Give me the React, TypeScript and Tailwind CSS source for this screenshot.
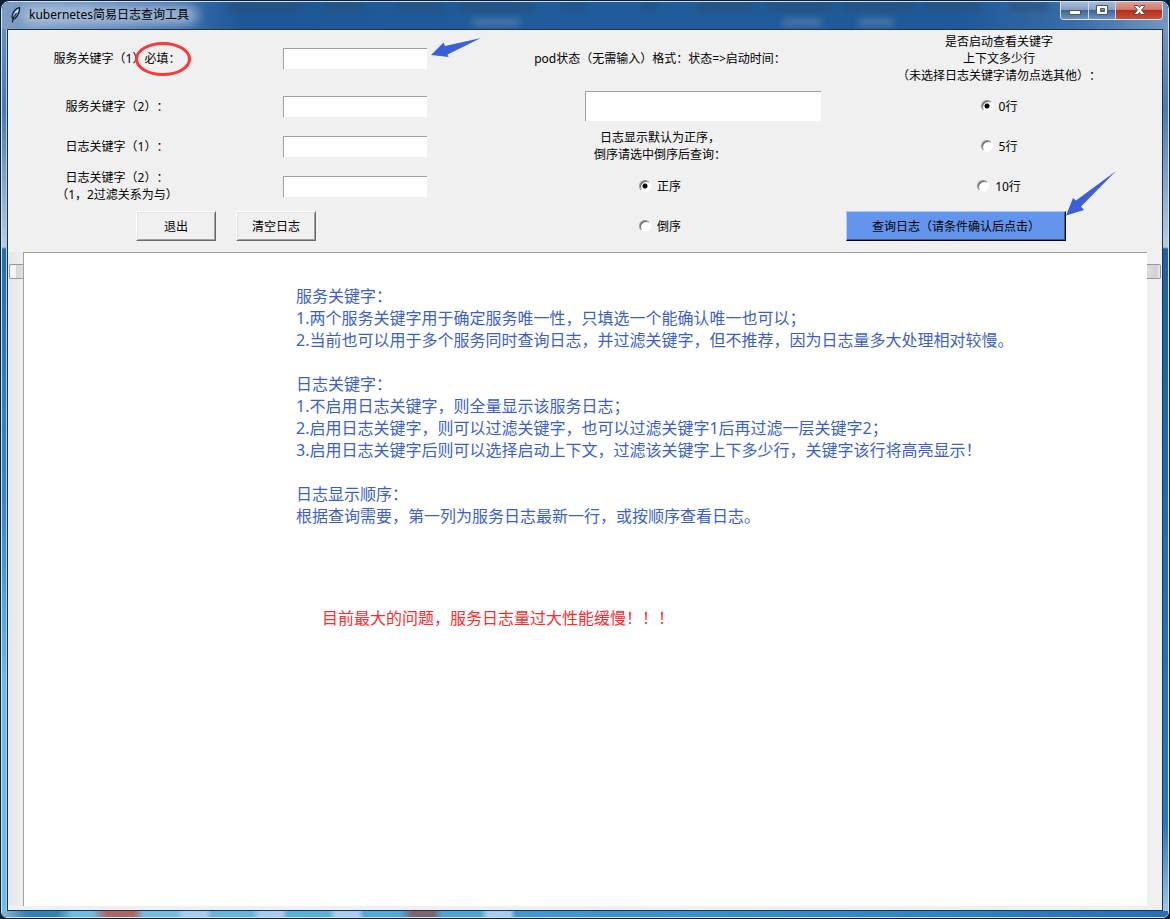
import { useState } from "react";
import type { ReactNode } from "react";

const SMUDGES = [
  [228, 6, 74], [326, 6, 38], [398, 6, 44], [460, 6, 74], [472, 22, 48],
  [560, 6, 26], [642, 6, 14], [698, 6, 54], [768, 6, 64], [782, 22, 40],
  [844, 6, 68], [858, 22, 36], [926, 6, 54], [1010, 6, 38],
];

const CONTEXT = [
  { value: "0", label: "0行" },
  { value: "5", label: "5行" },
  { value: "10", label: "10行" },
];

function Entry({ id }: { id: string }) {
  return (
    <input
      id={id}
      type="text"
      className="w-36 h-[21px] px-1 bg-white border-t border-l border-[#a0a0a0] outline-none"
    />
  );
}

interface RadioProps {
  name: string;
  label: string;
  checked: boolean;
  onChange: () => void;
}

function Radio({ name, label, checked, onChange }: RadioProps) {
  return (
    <label className="flex items-center gap-1.5">
      <input
        type="radio"
        name={name}
        checked={checked}
        onChange={onChange}
        className="appearance-none size-3 rounded-full bg-white border border-t-[#909090] border-l-[#909090] border-r-white border-b-white shadow-[inset_1px_1px_0_#606060] checked:bg-[radial-gradient(circle,#000_2px,#fff_3px)]"
      />
      {label}
    </label>
  );
}

function PushButton({ children }: { children: ReactNode }) {
  return (
    <button
      type="button"
      className="w-20 h-[30px] bg-[#f0f0f0] border border-t-white border-l-white border-r-[#696969] border-b-[#696969] shadow-[inset_1px_1px_0_#e3e3e3,inset_-1px_-1px_0_#a0a0a0]"
    >
      {children}
    </button>
  );
}

function Feather() {
  return (
    <svg width="12" height="18" viewBox="0 0 12 18">
      <path d="M9.500 1.500 C5.500 2 2.500 6 2 11 L3 13 L5 12.500 C8 9.500 10 5.500 9.500 1.500Z" fill="#6fa6d8" stroke="#101820" strokeWidth="1.200" />
      <path d="M8 4 C6 6 4.600 8.500 3.900 11" stroke="#e6f3ff" strokeWidth="1.400" fill="none" />
      <path d="M6.500 7 L3.200 12 L2.400 16.500" stroke="#101820" strokeWidth="1.200" fill="none" />
    </svg>
  );
}

function TitleBar() {
  return (
    <header className="relative flex items-center h-[27px] pl-2 pb-0.5 rounded-t-md overflow-hidden bg-[linear-gradient(90deg,#7f9dc4_0,#6b8fbe_80px,#3f70ab_170px,#1e5796_240px,#205c9b_50%,#1f5998_82%,#3a6ca8_92%,#7396c2_100%)]">
      <svg className="absolute inset-0 w-full h-full blur-[3px]" aria-hidden="true">
        {SMUDGES.map(([x, y, w]) => (
          <rect key={`${x}-${y}`} x={x - 2} y={y - 6} width={w} height="9" fill={y > 10 ? "#5d82aa" : "#2c4f74"} opacity="0.6" />
        ))}
      </svg>
      <div className="absolute left-5 top-1 w-44 h-[18px] rounded-full bg-[#c4d5e8] opacity-70 blur-[6px]" />
      <div className="relative flex items-center gap-[7px]">
        <Feather />
        <h1>kubernetes简易日志查询工具</h1>
      </div>
      <div className="absolute top-0 right-[5px] flex h-[18px] rounded-b border border-t-0 border-[#dbe7f3] overflow-hidden">
        <button type="button" aria-label="最小化" className="w-7 border-r border-[#c9d9ea] bg-[linear-gradient(#a9bdd5_0,#7f9cc0_48%,#3e6596_50%,#6d93be_100%)]">
          <svg width="27" height="17" viewBox="0 0 27 17">
            <rect x="8.5" y="8.5" width="11" height="4" fill="#fff" stroke="#4b5668" />
          </svg>
        </button>
        <button type="button" aria-label="最大化" className="w-[27px] border-r border-[#c9d9ea] bg-[linear-gradient(#a9bdd5_0,#7f9cc0_48%,#3e6596_50%,#6d93be_100%)]">
          <svg width="26" height="17" viewBox="0 0 26 17">
            <path d="M7.5 3.5h11v9h-11z M11.5 6.5v3h4v-3z" fill="#fff" fillRule="evenodd" stroke="#4b5668" />
          </svg>
        </button>
        <button type="button" aria-label="关闭" className="w-[46px] bg-[linear-gradient(#dfa093_0,#cf7566_48%,#b52f1b_50%,#c9503c_100%)]">
          <svg width="46" height="17" viewBox="0 0 46 17">
            <path d="M18.5 3.5h3.500l1.500 2 1.500-2h3.500v1l-3 3.500 3 3.500v1H25l-1.500-2-1.500 2h-3.500v-1l3-3.500-3-3.500z" fill="#fff" stroke="#5a4450" />
          </svg>
        </button>
      </div>
    </header>
  );
}

export default function App() {
  const [order, setOrder] = useState("asc");
  const [context, setContext] = useState("0");

  return (
    <div className="min-h-screen flex flex-col p-px bg-[#0b2038] text-xs leading-[17px] text-black font-['Noto_Sans','Noto_Sans_CJK_SC',sans-serif] [text-spacing-trim:space-all]">
      <div className="flex-1 flex flex-col rounded-t-lg rounded-b-md border border-[#cfe3f3] overflow-hidden">
        <TitleBar />

        <div className="flex-1 flex">
          <div className="w-[5px] bg-[linear-gradient(#6b8fbe_0,#4a7ab0_80px,#b9cde2_218px,#256fae_220px,#3a8cc6_55%,#6fbde6_75%)]" />
          <main className="flex-1 flex flex-col bg-[#f0f0f0] border border-[#1b3450] outline outline-[#a9cbe2]">
            <form className="grid grid-cols-[218fr_258fr_352fr_326fr] grid-rows-[56px_repeat(4,40px)] items-center justify-items-center text-center">
              <label htmlFor="service1" className="relative">
                服务关键字（1）必填：
                <svg className="absolute -right-3 -top-2" width="58" height="36" viewBox="0 0 58 36">
                  <ellipse cx="29" cy="17" rx="26.500" ry="15.500" fill="none" stroke="#fb3737" strokeWidth="3" />
                </svg>
              </label>
              <div className="relative flex">
                <Entry id="service1" />
                <svg className="absolute left-full -top-3 ml-1" width="52" height="24" viewBox="0 0 52 24">
                  <path d="M0 19 L12.500 6.500 L14 10 L50 2 L16.500 18.500 L17.500 21Z" fill="#3a5fd9" />
                </svg>
              </div>
              <label htmlFor="pod">pod状态（无需输入）格式：状态=&gt;启动时间：</label>
              <p>
                是否启动查看关键字
                <br />
                上下文多少行
                <br />
                （未选择日志关键字请勿点选其他）：
              </p>

              <label htmlFor="service2">服务关键字（2）：</label>
              <Entry id="service2" />
              <input
                id="pod"
                type="text"
                className="w-[236px] h-[30px] px-1 mr-[15px] justify-self-end bg-white border-t border-l border-[#a0a0a0] outline-none"
              />
              <Radio name="context" label={CONTEXT[0].label} checked={context === "0"} onChange={() => setContext("0")} />

              <label htmlFor="log1">日志关键字（1）：</label>
              <Entry id="log1" />
              <p>
                日志显示默认为正序，
                <br />
                倒序请选中倒序后查询：
              </p>
              <Radio name="context" label={CONTEXT[1].label} checked={context === "5"} onChange={() => setContext("5")} />

              <label htmlFor="log2">
                日志关键字（2）：
                <br />
                （1，2过滤关系为与）
              </label>
              <Entry id="log2" />
              <Radio name="order" label="正序" checked={order === "asc"} onChange={() => setOrder("asc")} />
              <Radio name="context" label={CONTEXT[2].label} checked={context === "10"} onChange={() => setContext("10")} />

              <div className="col-span-2 justify-self-start flex gap-5 pl-32">
                <PushButton>退出</PushButton>
                <PushButton>清空日志</PushButton>
              </div>
              <Radio name="order" label="倒序" checked={order === "desc"} onChange={() => setOrder("desc")} />
              <div className="relative justify-self-start ml-[10px]">
                <button
                  type="button"
                  className="w-[220px] h-[30px] bg-[#6495ed] border border-t-[#a8cdf8] border-l-[#a8cdf8] border-r-black border-b-black shadow-[inset_-1px_-1px_0_#3c5a8f]"
                >
                  查询日志（请条件确认后点击）
                </button>
                <svg className="absolute left-full bottom-[25px]" width="52" height="46" viewBox="0 0 52 46">
                  <path d="M0 45.500 L7 28 L10 30.500 L50 1 L15 36.500 L18 40Z" fill="#3a5fd9" />
                </svg>
              </div>
            </form>

            {/* Log output */}
            <section className="flex-1 flex pt-1.5 pb-1">
              <div className="w-[15px] pl-px pt-3 bg-[linear-gradient(90deg,#f0f0f0,#e6e6e6_2px,#f0f0f0)]">
                <div className="h-[15px] rounded-l-xs border border-r-0 border-[#979797] bg-[linear-gradient(90deg,#f5f5f5_45%,#d6d7da_50%,#dfe0e2)]" />
              </div>
              <div className="flex-1 bg-white border-t border-l border-[#a0a0a0] pl-[272px] pt-8 text-base leading-[22px] text-[#3a5fcd]">
                <h2>服务关键字：</h2>
                <p>1.两个服务关键字用于确定服务唯一性，只填选一个能确认唯一也可以；</p>
                <p>2.当前也可以用于多个服务同时查询日志，并过滤关键字，但不推荐，因为日志量多大处理相对较慢。</p>
                <h2 className="mt-[22px]">日志关键字：</h2>
                <p>1.不启用日志关键字，则全量显示该服务日志；</p>
                <p>2.启用日志关键字，则可以过滤关键字，也可以过滤关键字1后再过滤一层关键字2；</p>
                <p>3.启用日志关键字后则可以选择启动上下文，过滤该关键字上下多少行，关键字该行将高亮显示！</p>
                <h2 className="mt-[22px]">日志显示顺序：</h2>
                <p>根据查询需要，第一列为服务日志最新一行，或按顺序查看日志。</p>
                <p className="mt-20 pl-[26px] text-[#fb2c2c]">目前最大的问题，服务日志量过大性能缓慢！！！</p>
              </div>
              <div className="w-[15px] pr-px pt-3">
                <div className="h-[15px] rounded-r-xs border border-l-0 border-[#979797] bg-[linear-gradient(90deg,#dcdddf,#d0d1d4_70%,#e8e8e8)]" />
              </div>
            </section>
          </main>
          <div className="w-[5px] bg-[linear-gradient(#7396c2_0,#4a7ab0_80px,#b9cde2_218px,#1b62a0_220px,#2677be_90%,#9cc4ea_100%)]" />
        </div>

        <div className="h-1.5 bg-[linear-gradient(90deg,#8fb8d0_0,#2f83b5_25px,#2f83b5_55px,#6fbde6_70px,#6fbde6_90px,#b0655e_105px,#b0655e_132px,#6fbde6_142px,#6fbde6_174px,#a9cdf2_182px,#a9cdf2_204px,#64b6e0_210px,#64b6e0_250px,#a9cdf2_258px,#a9cdf2_280px,#58b0dc_286px,#58b0dc_326px,#a9cdf2_334px,#a9cdf2_356px,#50aada_362px,#50aada_398px,#7d6470_410px,#7d6470_432px,#4aa5d8_440px,#4aa5d8_478px,#a9cdf2_486px,#a9cdf2_508px,#409ad2_514px,#2f84c8_80%,#2470b8_100%)]" />
      </div>
    </div>
  );
}
